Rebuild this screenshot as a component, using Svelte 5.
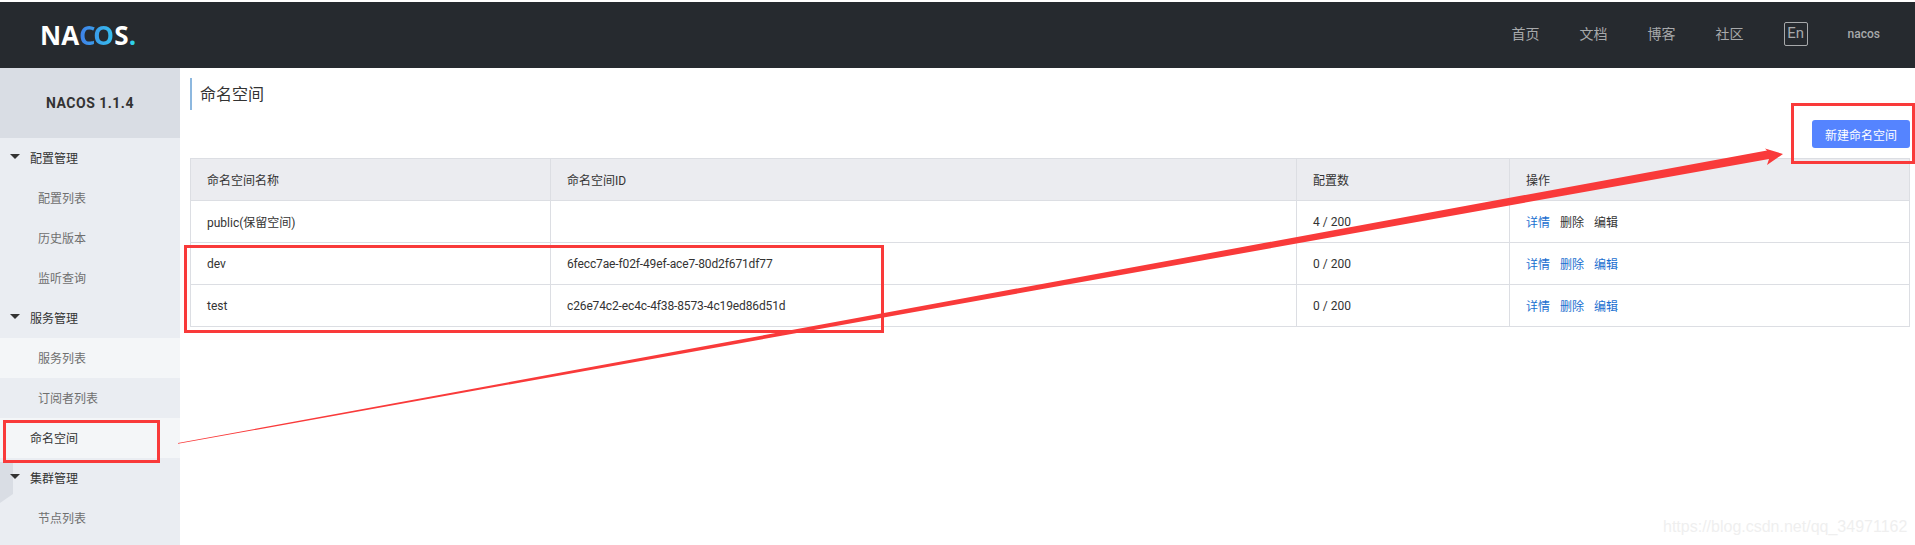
<script lang="ts">
	interface NavItem {
		label: string;
		kind: 'group' | 'sub' | 'current';
		hover?: boolean;
	}

	const navLinks = ['首页', '文档', '博客', '社区'];

	const menu: NavItem[] = [
		{ label: '配置管理', kind: 'group' },
		{ label: '配置列表', kind: 'sub' },
		{ label: '历史版本', kind: 'sub' },
		{ label: '监听查询', kind: 'sub' },
		{ label: '服务管理', kind: 'group' },
		{ label: '服务列表', kind: 'sub', hover: true },
		{ label: '订阅者列表', kind: 'sub' },
		{ label: '命名空间', kind: 'current' },
		{ label: '集群管理', kind: 'group' },
		{ label: '节点列表', kind: 'sub' }
	];

	const rows = [
		{ name: 'public(保留空间)', id: '', count: '4 / 200', reserved: true },
		{ name: 'dev', id: '6fecc7ae-f02f-49ef-ace7-80d2f671df77', count: '0 / 200', reserved: false },
		{ name: 'test', id: 'c26e74c2-ec4c-4f38-8573-4c19ed86d51d', count: '0 / 200', reserved: false }
	];
</script>

<div class="page">
	<header class="topbar">
		<div class="logo">
			<span>NA</span><span class="logo-co">CO</span><span>S</span><span class="logo-dot">.</span>
		</div>
		<nav class="links">
			{#each navLinks as link}
				<span>{link}</span>
			{/each}
			<span class="lang">En</span>
			<span class="user">nacos</span>
		</nav>
	</header>

	<div class="body">
		<aside class="sidebar">
			<div class="product">NACOS 1.1.4</div>
			{#each menu as item}
				<div class="item {item.kind}" class:hover={item.hover}>
					{#if item.kind === 'group'}<i class="caret"></i>{/if}
					{item.label}
				</div>
			{/each}
			<div class="toggle"></div>
		</aside>

		<main class="content">
			<h1 class="title">命名空间</h1>
			<div class="toolbar">
				<button class="primary">新建命名空间</button>
			</div>
			<table>
				<colgroup>
					<col style="width: 360px" />
					<col style="width: 746px" />
					<col style="width: 213px" />
					<col />
				</colgroup>
				<thead>
					<tr>
						<th>命名空间名称</th>
						<th>命名空间ID</th>
						<th>配置数</th>
						<th>操作</th>
					</tr>
				</thead>
				<tbody>
					{#each rows as row}
						<tr>
							<td>{row.name}</td>
							<td class="uuid">{row.id}</td>
							<td>{row.count}</td>
							<td>
								<div class="ops">
									<span class="link">详情</span>
									<span class:link={!row.reserved}>删除</span>
									<span class:link={!row.reserved}>编辑</span>
								</div>
							</td>
						</tr>
					{/each}
				</tbody>
			</table>
		</main>
	</div>

	<!-- screenshot annotations drawn over the page -->
	<svg class="marks" width="1915" height="545" viewBox="0 0 1915 545">
		<g fill="none" stroke="#f93a3a" stroke-width="3">
			<rect x="4.5" y="421.5" width="154" height="40" />
			<rect x="185.5" y="246.5" width="697" height="85" />
			<rect x="1792.5" y="104.5" width="121" height="58" />
		</g>
		<polygon
			fill="#f93a3a"
			points="178,443 1767,150.5 1765,148.5 1783,154 1767,165 1769,159 178,443.8"
		/>
	</svg>
	<div class="watermark">https://blog.csdn.net/qq_34971162</div>
</div>

<style>
	:global(body) {
		margin: 0;
		background: #fff;
	}

	.page {
		position: relative;
		width: 1915px;
		height: 545px;
		overflow: hidden;
		padding-top: 2px;
		box-sizing: border-box;
		font-family: Roboto, 'Noto Sans CJK SC', sans-serif;
		font-size: 12px;
		color: #333;
	}

	.topbar {
		height: 66px;
		background: #262a2f;
		display: flex;
		align-items: center;
		justify-content: space-between;
		padding: 0 35px 0 40px;
	}

	.logo {
		font-family: 'Open Sans', sans-serif;
		font-size: 26px;
		font-weight: 700;
		color: #fff;
		line-height: 1;
	}

	.logo-co {
		letter-spacing: -2.5px;
		padding-right: 3px;
		background: linear-gradient(90deg, #3f7fe8, #35c0ee);
		-webkit-background-clip: text;
		background-clip: text;
		color: transparent;
	}

	.logo-dot {
		color: #2fd0e8;
	}

	.links {
		display: flex;
		align-items: center;
		gap: 40px;
		font-size: 14px;
		line-height: 18px;
		color: #a7a9ab;
		transform: translateY(-1px);
	}

	.lang {
		width: 22px;
		height: 22px;
		border: 1px solid #a7a9ab;
		border-radius: 2px;
		font-size: 15px;
		line-height: 20px;
		text-align: center;
	}

	.user {
		font-size: 12px;
		font-weight: 500;
	}

	.body {
		display: flex;
		height: 477px;
	}

	.sidebar {
		position: relative;
		width: 180px;
		flex: none;
		background: #eaedf2;
	}

	.product {
		height: 70px;
		background: #d9dde4;
		display: flex;
		align-items: center;
		justify-content: center;
		font-size: 14px;
		font-weight: 700;
		letter-spacing: 0.5px;
	}

	.item {
		position: relative;
		z-index: 1;
		height: 40px;
		line-height: 42px;
		padding-left: 38px;
		color: #6f6f6f;
	}

	.item.group {
		padding-left: 30px;
		color: #333;
	}

	.item.current {
		padding-left: 30px;
		background: #f4f6f8;
		color: #333;
	}

	.item.hover {
		background: #f4f6f8;
	}

	.caret {
		position: absolute;
		left: 10px;
		top: 16px;
		border-style: solid;
		border-width: 5px 5px 0;
		border-color: #333 transparent transparent;
	}

	.toggle {
		position: absolute;
		left: 0;
		top: 394px;
		width: 13px;
		height: 41px;
		background: #d9dde4;
		clip-path: polygon(0 0, 100% 0, 100% 78%, 0 100%);
	}

	.content {
		flex: 1;
		min-width: 0;
		padding: 10px 5px 0 10px;
	}

	.title {
		margin: 0;
		height: 32px;
		line-height: 34px;
		padding-left: 8px;
		border-left: 2px solid #8db8df;
		font-size: 16px;
		font-weight: 400;
	}

	.toolbar {
		display: flex;
		justify-content: flex-end;
		margin: 10px 0;
	}

	.primary {
		width: 98px;
		height: 28px;
		border: 0;
		border-radius: 3px;
		background: #5584ff;
		color: #fff;
		font: inherit;
		padding: 0;
	}

	table {
		width: 1720px;
		table-layout: fixed;
		border-collapse: collapse;
	}

	th,
	td {
		height: 42px;
		padding: 0 16px;
		border: 1px solid #dcdee3;
		box-sizing: border-box;
		text-align: left;
		font-weight: 400;
	}

	th {
		background: #ebecf0;
	}

	.uuid {
		letter-spacing: -0.13px;
	}

	.ops {
		display: flex;
		gap: 10px;
	}

	.ops .link {
		color: #1a6fd0;
	}

	.marks {
		position: absolute;
		left: 0;
		top: 0;
		z-index: 2;
		pointer-events: none;
	}

	.watermark {
		position: absolute;
		left: 1663px;
		top: 518px;
		font-family: 'Liberation Sans', sans-serif;
		font-size: 16px;
		line-height: 18px;
		color: #efefef;
	}
</style>
